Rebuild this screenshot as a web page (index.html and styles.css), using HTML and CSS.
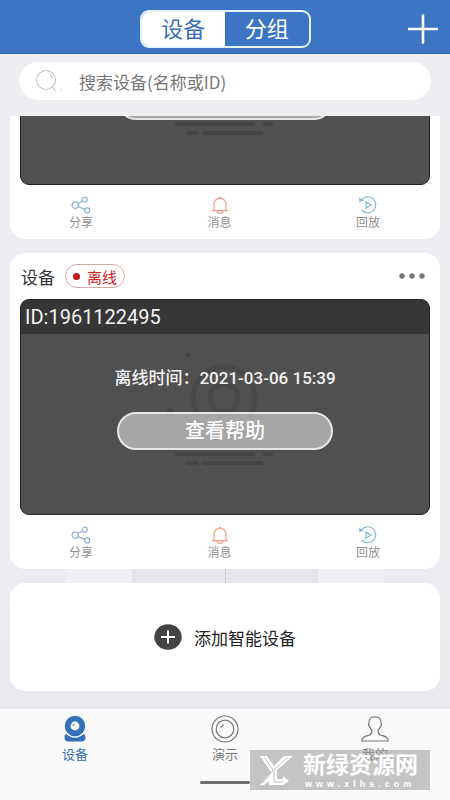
FILE: index.html
```html
<!DOCTYPE html>
<html lang="zh-CN">
<head>
<meta charset="utf-8">
<meta name="viewport" content="width=device-width, initial-scale=1">
<title>设备</title>
<link rel="stylesheet" href="styles.css">
</head>
<body>
<svg class="defs" aria-hidden="true">
  <symbol id="share" viewBox="0 0 20 18">
    <g fill="none" stroke="#8fb2de" stroke-width="1.2"><circle cx="4.2" cy="9.2" r="3.1"/><circle cx="13.8" cy="3.6" r="2.5"/><circle cx="16.2" cy="14.4" r="2.5"/><path d="M7 7.6 11.6 5M7 10.6l6.900 2.800"/></g>
  </symbol>
  <symbol id="bell" viewBox="0 0 20 18">
    <g fill="none" stroke="#f0a08c" stroke-width="1.2"><path d="M4 14.400V8.200a6 6 0 0 1 12 0v6.200M1.800 14.600h16.400M8.900 2a1.200 1.200 0 0 1 2.200 0M7 14.800a3 2.600 0 0 0 6 0"/></g>
  </symbol>
  <symbol id="replay" viewBox="0 0 20 18">
    <g fill="none" stroke="#82bcd8" stroke-width="1.2"><path d="M3.200 4.200A8 8 0 1 1 3.700 14M8 6v6.200l5.200-3.100z"/></g><path d="M1 1.600 1.400 6.300 5.600 4.600z" fill="#82bcd8"/>
  </symbol>
  <symbol id="lens" viewBox="0 0 140 130">
    <g fill="none" stroke="#494949" stroke-width="5"><circle cx="69" cy="52" r="31"/><circle cx="69" cy="52" r="14"/></g>
    <g fill="#454545"><circle cx="33" cy="9" r="2.500"/><circle cx="15" cy="65" r="3"/><path d="M20 106h80v4H20zM108 106h10v4h-10zM32 115h11v4H32zM48 115h60v4H48z"/></g>
  </symbol>
</svg>
<div class="app">
  <header class="topbar">
    <div class="segmented">
      <button class="segment segment-active" type="button">设备</button>
      <button class="segment" type="button">分组</button>
    </div>
    <button class="add" type="button" aria-label="添加">
      <svg width="30" height="30" viewBox="0 0 30 30"><path d="M15 1.500v27M1 15h28" stroke="#fff" stroke-width="2.600" stroke-linecap="round"/></svg>
    </button>
  </header>
  <div class="search-row">
    <label class="search">
      <svg width="28" height="24" viewBox="0 0 28 24"><g fill="none" stroke="#c4c4c4" stroke-width="1.100"><circle cx="11" cy="11" r="9.500"/><path d="M17.500 18l3 4M15 5.500a6 6 0 0 1 2.500 4"/></g><circle cx="26" cy="21" r=".6" fill="#999"/></svg>
      <input type="text" placeholder="搜索设备(名称或ID)" aria-label="搜索设备">
    </label>
  </div>
  <main class="feed">
    <article class="card">
      <div class="preview">
        <svg class="lens"><use href="#lens"/></svg>
        <span class="help"></span>
      </div>
      <div class="actions">
        <button type="button"><svg><use href="#share"/></svg>分享</button>
        <button type="button"><svg><use href="#bell"/></svg>消息</button>
        <button type="button"><svg><use href="#replay"/></svg>回放</button>
      </div>
    </article>
    <article class="card">
      <div class="card-head">
        <h2>设备</h2>
        <span class="status">离线</span>
        <button class="more" type="button" aria-label="更多"><svg width="26" height="6" viewBox="0 0 26 6" fill="#777"><circle cx="3" cy="3" r="2.700"/><circle cx="13" cy="3" r="2.700"/><circle cx="23" cy="3" r="2.700"/></svg></button>
      </div>
      <div class="preview">
        <svg class="lens"><use href="#lens"/></svg>
        <div class="device-id">ID:1961122495</div>
        <p class="offline">离线时间：2021-03-06 15:39</p>
        <button class="help" type="button">查看帮助</button>
      </div>
      <div class="actions">
        <button type="button"><svg><use href="#share"/></svg>分享</button>
        <button type="button"><svg><use href="#bell"/></svg>消息</button>
        <button type="button"><svg><use href="#replay"/></svg>回放</button>
      </div>
    </article>
    <button class="card add-card" type="button">
      <svg width="28" height="26" viewBox="0 0 28 26"><ellipse cx="14" cy="13" rx="13.700" ry="12.700" fill="#444"/><path d="M14 6.500v13M7 13h14" stroke="#fff" stroke-width="2"/></svg>
      添加智能设备
    </button>
  </main>
  <nav class="tabs">
    <a class="tab tab-active" href="#devices">
      <svg width="28" height="28" viewBox="0 0 28 28"><rect x="3.500" y="18.500" width="21" height="8" rx="4" fill="#3571b9"/><circle cx="14" cy="11" r="11" fill="#3571b9" stroke="#fafafa" stroke-width="1.500"/><circle cx="14" cy="11" r="4.400" fill="#fff"/><path d="M11.800 11a2.400 2.400 0 0 1 2-2.200" fill="none" stroke="#3571b9" stroke-width="1"/></svg>
      设备
    </a>
    <a class="tab" href="#demo">
      <svg width="28" height="28" viewBox="0 0 28 28"><g fill="none" stroke="#777" stroke-width="1.200"><circle cx="14" cy="14" r="13"/><circle cx="14" cy="14" r="8.800"/><path d="M9.800 13a5 5 0 0 1 3.200-3.200"/></g></svg>
      演示
    </a>
    <a class="tab" href="#mine">
      <svg width="28" height="28" viewBox="0 0 28 28"><path d="M14 1.800c-4.500 0-6.300 2-6 6.200-.8 1.800 0 3.500 1 4.200.5 1.800 1.400 2.900 2 3.600 0 2.800-.6 3.600-3 4.400C4.400 21.300 1 21.500.800 26h26.400c-.2-4.500-3.600-4.700-7.200-5.800-2.400-.8-3-1.600-3-4.400.6-.7 1.500-1.800 2-3.600 1-.7 1.800-2.400 1-4.200.3-4.200-1.500-6.200-6-6.200z" fill="none" stroke="#777" stroke-width="1.200"/></svg>
      我的
    </a>
  </nav>
  <div class="home-area"><span class="home-bar"></span></div>
  <div class="watermark">
    <svg width="30" height="30" viewBox="0 0 30 30"><path d="M0 1h7l7 10 10-10h9L17 15v9h6v-3l6 5-6 4H9v-4L4 30H0l11-13z" fill="#fff"/><path d="M4 2l9 13-10 13M28 2 14 15v12h9" fill="none" stroke="#c2c2c2" stroke-width="1"/></svg>
    <div class="mark-text"><strong>新绿资源网</strong><span>www.xlhs.com</span></div>
  </div>
</div>
</body>
</html>
```
FILE: styles.css
```css
* { box-sizing: border-box; }

body {
  margin: 0;
  background: #eeeef2;
  font-family: Roboto, "Noto Sans CJK SC", sans-serif;
  color: #333;
}

button {
  margin: 0;
  padding: 0;
  border: 0;
  background: none;
  font: inherit;
  color: inherit;
}

.defs { display: none; }

.app {
  position: relative;
  display: flex;
  flex-direction: column;
  height: 100vh;
}

.topbar {
  display: grid;
  grid-template-columns: 1fr auto 1fr;
  align-items: center;
  flex: none;
  height: 54px;
  padding: 5px 12px 0;
  background: #3b75c3;
  border-bottom: 1px solid #3266ac;
}

.segmented {
  display: flex;
  grid-column: 2;
  width: 171px;
  height: 38px;
  border: 2px solid #e4f3ff;
  border-radius: 9px;
  overflow: hidden;
}

.segment {
  flex: 1;
  padding-top: 2px;
  font-size: 22px;
  line-height: 32px;
  color: #fff;
}

.segment-active {
  background: #fff;
  color: #3b70b4;
}

.add {
  display: flex;
  justify-self: end;
}

.search-row {
  flex: none;
  padding: 8px 19px 16px;
}

.search {
  display: flex;
  align-items: center;
  gap: 16px;
  height: 38px;
  padding: 0 16px;
  border-radius: 19px;
  background: #fff;
}

.search input {
  flex: 1;
  min-width: 0;
  padding: 0;
  border: 0;
  outline: 0;
  background: none;
  font: 17px "Noto Sans CJK SC", sans-serif;
}

.search input::placeholder { color: #777; }

.feed {
  display: flex;
  flex: 1;
  flex-direction: column;
  justify-content: flex-end;
  gap: 14px;
  min-height: 0;
  padding: 0 10px 18px;
  overflow: hidden;
  background:
    linear-gradient(#c9c9cd, #c9c9cd) 50% calc(100% - 126px) / 1px 14px no-repeat,
    linear-gradient(#e6e6ea, #e6e6ea) 50% calc(100% - 126px) / 186px 14px no-repeat,
    linear-gradient(#f1f1f5, #f1f1f5) 50% calc(100% - 126px) / 316px 14px no-repeat,
    linear-gradient(#eeeef2 70%, #e9e9ed);
}

.card {
  flex: none;
  border-radius: 15px;
  background: #fff;
}

.card-head {
  display: flex;
  align-items: center;
  gap: 10px;
  height: 46px;
  padding: 0 15px 0 11px;
}

.card-head h2 {
  margin: 0;
  font-size: 17px;
  font-weight: 400;
}

.status {
  display: flex;
  align-items: center;
  gap: 7px;
  height: 24px;
  padding: 0 7px;
  border: 1px solid #d9a9a9;
  border-radius: 12px;
  font-size: 15px;
  color: #d32626;
}

.status::before {
  width: 7px;
  height: 7px;
  border-radius: 50%;
  background: #c41818;
  content: "";
}

.more {
  display: flex;
  margin-left: auto;
}

.preview {
  position: relative;
  display: flex;
  flex-direction: column;
  align-items: center;
  justify-content: flex-end;
  height: 216px;
  margin: 0 10px;
  padding-bottom: 64px;
  border: 1px solid #222;
  border-radius: 9px;
  background: #505050;
  overflow: hidden;
}

.lens {
  position: absolute;
  top: 46px;
  left: calc(50% - 70px);
  width: 140px;
  height: 130px;
}

.device-id {
  align-self: stretch;
  flex: none;
  height: 34px;
  margin-bottom: auto;
  padding-left: 4px;
  background: #363636;
  font-size: 20px;
  line-height: 34px;
  color: #f2f2f2;
}

.offline {
  position: relative;
  margin: 0 0 22px;
  font-size: 17px;
  font-weight: 500;
  line-height: 24px;
  color: #f2f2f2;
}

.help {
  position: relative;
  flex: none;
  width: 216px;
  height: 38px;
  border: 2px solid #e6e6e6;
  border-radius: 19px;
  background: #a6a6a6;
  font-size: 20px;
  font-weight: 500;
  line-height: 34px;
  color: #fff;
}

.actions {
  display: grid;
  grid-template-columns: 124fr 153fr 144fr;
  height: 54px;
  padding: 11px 0 0 9px;
}

.actions button {
  display: flex;
  flex-direction: column;
  align-items: center;
  font-size: 12px;
  line-height: 18px;
  color: #909090;
}

.actions svg {
  width: 20px;
  height: 18px;
}

.add-card {
  display: flex;
  align-items: center;
  justify-content: center;
  gap: 12px;
  height: 108px;
  font-size: 17px;
  color: #222;
}

.tabs {
  display: flex;
  flex: none;
  height: 56px;
  padding-top: 6px;
  background: #fafafa;
}

.tab {
  display: flex;
  flex: 1;
  flex-direction: column;
  align-items: center;
  gap: 2px;
  font-size: 13px;
  line-height: 20px;
  color: #777;
  text-decoration: none;
}

.tab-active { color: #3571b9; }

.home-area {
  display: flex;
  flex: none;
  justify-content: center;
  height: 35px;
  padding-top: 16px;
  background: #fafafa;
}

.home-bar {
  width: 50px;
  height: 3px;
  border-radius: 2px;
  background: #707070;
}

.watermark {
  position: absolute;
  right: 20px;
  bottom: 10px;
  display: flex;
  align-items: center;
  gap: 13px;
  width: 180px;
  height: 40px;
  padding-left: 10px;
  background: rgba(160, 160, 160, 0.6);
  color: #fff;
}

.watermark svg { overflow: visible; }

.mark-text {
  display: flex;
  flex-direction: column;
}

.mark-text strong {
  padding-top: 2px;
  font-size: 23px;
  line-height: 26px;
}

.mark-text span {
  padding-left: 2px;
  font: bold 9px/10px "Liberation Sans", sans-serif;
  letter-spacing: 4px;
}
```
